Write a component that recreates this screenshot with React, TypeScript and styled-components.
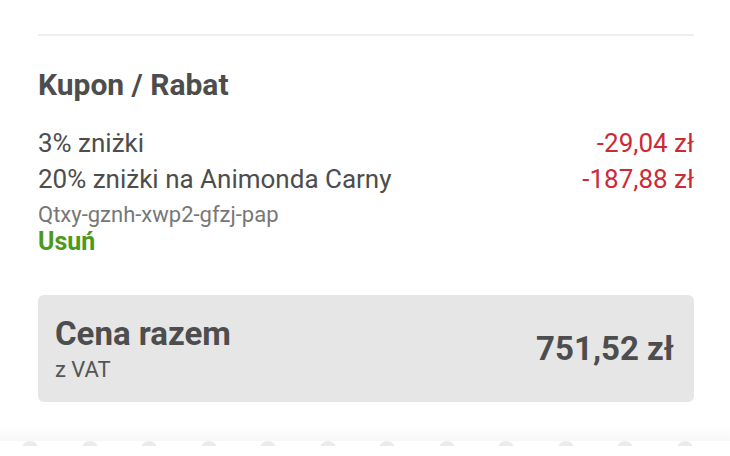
import React from "react";
import styled, { createGlobalStyle } from "styled-components";

const Global = createGlobalStyle`
  html, body { margin: 0; padding: 0; background: #fff; }
  body { font-family: Roboto, "Noto Sans", sans-serif; color: #4d4d4d; }
  * { box-sizing: border-box; }
`;

const Page = styled.div`
  width: 730px;
  height: 456px;
  overflow: hidden;
  display: flex;
  flex-direction: column;
`;

const Content = styled.div`
  padding: 34px 36px 0 38px;
  display: flex;
  flex-direction: column;
`;

const Divider = styled.div`
  height: 2px;
  background: #efefef;
`;

const Heading = styled.h2`
  margin: 31px 0 0;
  font-size: 30px;
  font-weight: 700;
  line-height: 36px;
  color: #4d4d4d;
`;

const Rows = styled.div`
  margin-top: 22px;
  display: flex;
  flex-direction: column;
`;

const Row = styled.div`
  display: flex;
  justify-content: space-between;
  align-items: baseline;
  font-size: 26px;
  line-height: 36px;
  height: 36px;
`;

const Label = styled.span`
  color: #4d4d4d;
`;

const Amount = styled.span`
  color: #cc2a36;
`;

const Code = styled.div`
  margin-top: 5px;
  font-size: 22px;
  line-height: 26px;
  color: #777;
`;

const Remove = styled.div`
  font-size: 25px;
  font-weight: 700;
  line-height: 28px;
  color: #4c9a1c;
`;

const TotalBox = styled.div`
  margin-top: 39px;
  height: 107px;
  background: #e6e6e6;
  border-radius: 6px;
  display: flex;
  align-items: center;
  justify-content: space-between;
  padding: 0 20px 0 17px;
`;

const TotalLeft = styled.div`
  display: flex;
  flex-direction: column;
`;

const TotalTitle = styled.div`
  font-size: 33px;
  font-weight: 700;
  line-height: 38px;
  color: #4d4d4d;
`;

const TotalSub = styled.div`
  margin-top: 4px;
  font-size: 22px;
  line-height: 26px;
  color: #555;
`;

const TotalPrice = styled.div`
  font-size: 33px;
  font-weight: 700;
  line-height: 38px;
  color: #4d4d4d;
`;

const Footer = styled.div`
  margin-top: 23px;
  height: 16px;
  flex: 0 0 16px;
  background: linear-gradient(#fff, #f7f7f7);
`;

const Dots = styled.div`
  height: 5px;
  display: flex;
  padding-left: 22px;
  overflow: hidden;
  background: #fff;
`;

const Dot = styled.div`
  flex: 0 0 16px;
  height: 16px;
  margin-right: 43.5px;
  border-radius: 50%;
  background: #ebebeb;
`;

export default function App() {
  return (
    <Page>
      <Global />
      <Content>
        <Divider />
        <Heading>Kupon / Rabat</Heading>
        <Rows>
          <Row>
            <Label>3% zniżki</Label>
            <Amount>-29,04 zł</Amount>
          </Row>
          <Row>
            <Label>20% zniżki na Animonda Carny</Label>
            <Amount>-187,88 zł</Amount>
          </Row>
        </Rows>
        <Code>Qtxy-gznh-xwp2-gfzj-pap</Code>
        <Remove>Usuń</Remove>
        <TotalBox>
          <TotalLeft>
            <TotalTitle>Cena razem</TotalTitle>
            <TotalSub>z VAT</TotalSub>
          </TotalLeft>
          <TotalPrice>751,52 zł</TotalPrice>
        </TotalBox>
      </Content>
      <Footer />
      <Dots>
        {Array.from({ length: 12 }).map((_, i) => (
          <Dot key={i} />
        ))}
      </Dots>
    </Page>
  );
}
